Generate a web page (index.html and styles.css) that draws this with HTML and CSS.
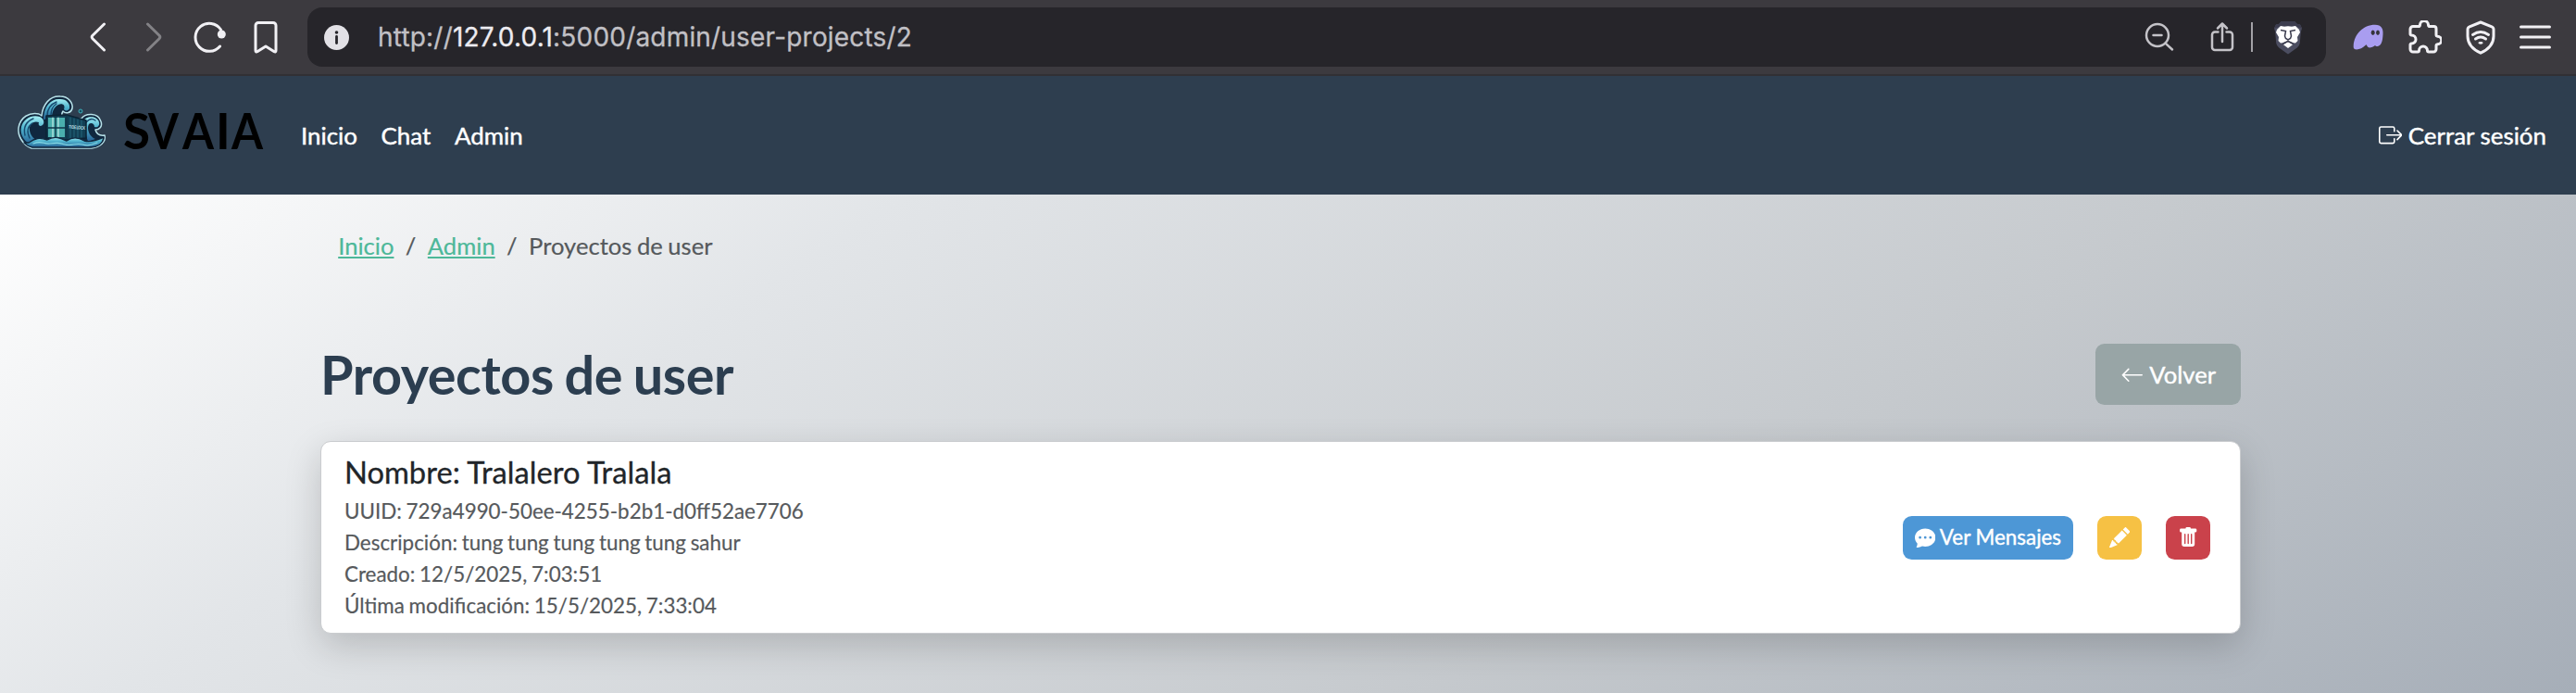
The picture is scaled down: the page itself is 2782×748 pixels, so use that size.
FILE: index.html
```html
<!DOCTYPE html>
<html lang="es">
<head>
<meta charset="utf-8">
<title>Proyectos de user</title>
<link rel="stylesheet" href="styles.css">
</head>
<body>
<div class="chrome">
  <div class="chrome-nav">
    <svg width="18" height="32" viewBox="0 0 18 32" class="line bright"><path d="M15.500 2 3 14.300q-1.600 1.700 0 3.400L15.500 30"/></svg>
    <svg width="18" height="32" viewBox="0 0 18 32" class="line dim"><path d="M2.500 2 15 14.300q1.600 1.700 0 3.400L2.500 30"/></svg>
    <svg width="36" height="34" viewBox="0 0 36 34" class="line bright"><path d="M28.500 27A15 15 0 1 1 29.500 9"/><circle cx="30.300" cy="14" r="4.500" class="solid"/></svg>
    <svg width="26" height="36" viewBox="0 0 26 36" class="line bright"><path d="M5 2.500h16a3 3 0 0 1 3 3v27q0 2.500-2.200 1L13 28l-8.800 5.500Q2 35 2 32.500v-27a3 3 0 0 1 3-3z"/></svg>
  </div>
  <div class="address">
    <svg width="27" height="27" viewBox="0 0 27 27"><circle cx="13.500" cy="13.500" r="13.500" fill="#e2e1e6"/><circle cx="13.500" cy="8" r="1.800" fill="#26252a"/><path d="M13.500 12.500v7" stroke="#26252a" stroke-width="2.800" stroke-linecap="round"/></svg>
    <span class="url">http://<b>127.0.0.1</b>:5000/admin/user-projects/2</span>
    <div class="address-tools">
      <svg width="32" height="32" viewBox="0 0 32 32" class="line soft"><circle cx="14" cy="14" r="12"/><path d="M9.500 14h9M22.800 22.800 30 29.500"/></svg>
      <svg class="share line soft" width="26" height="34" viewBox="0 0 26 34"><path d="M8.500 11.500H5a3 3 0 0 0-3 3v13.500a3 3 0 0 0 3 3h16a3 3 0 0 0 3-3V14.500a3 3 0 0 0-3-3h-3.500M13 22V2.500M8 7.500l5-5 5 5"/></svg>
      <i class="divider"></i>
      <svg width="32" height="37" viewBox="0 0 32 37"><path d="M9 1h14l3 3 3 .5 2 4-1.200 4-1 12q-.5 3-3 5L16 36.500 6.200 29.500q-2.500-2-3-5l-1-12L1 8.500l2-4L6 4z" fill="#4b4d60"/><path d="M9 1h14l3 3 3 .5 2 4-4-1-3-1.500H8L5 7.500l-4 1 2-4L6 4z" fill="#3b3c4e"/><path d="m8 6 4 .8 4-.5 4 .5 4-.8 4 4 1 3-3 5 .5 4-2.500 2.500-4-.5-4-2-4 2-4 .5L5.500 22 6 18l-3-5 1-3z" fill="#fff"/><path d="m16 23 5 3.200L16 30l-5-3.800z" fill="#fff"/><path d="m8 10.500 5.500 1-1 5.500 1 2.500L16 21l2.500-1.500 1-2.500-1-5.500 5.500-1M16 21v1.500l-5.500 2.500M16 22.500l5.500 2.500" fill="none" stroke="#3b3c4e" stroke-width="1.500"/></svg>
    </div>
  </div>
  <div class="chrome-tools">
    <svg width="34" height="28" viewBox="0 0 34 28"><path d="M24 .7C31 .7 33 5 32.500 11c-.3 5-.8 11.500-5 12.800-2 .6-2.500 0-3.500-.8-1.500 1-2 1.800-4.500 2.300-2.300.5-4-.5-4.500-2.500q-.5-1-1.500.2C10.500 26 6 28 2.500 27.300 1 27 .5 25.500.7 23 1.500 11 11 .7 24 .7z" fill="#a99df0"/><ellipse cx="21.700" cy="9.300" rx="2" ry="2.700" fill="#35343b"/><ellipse cx="27" cy="9.300" rx="1.900" ry="2.700" fill="#35343b"/></svg>
    <svg width="36" height="36" viewBox="0 0 36 36" class="line bright"><path d="M5 6.500h6q1.300 0 1.500-1.500a4.500 4.500 0 0 1 9 0q.2 1.500 1.500 1.500h4.500a2.500 2.500 0 0 1 2.500 2.500v6.500q0 1.500 1.500 1.700a4 4 0 0 1 0 8.500q-1.500.3-1.500 1.800v3.500a3 3 0 0 1-3 3h-5q-1.500 0-1.500-1.500a4.500 4.500 0 0 0-9 0q0 1.500-1.500 1.500H5a3 3 0 0 1-3-3v-4.500q0-1.300 1.500-1.500a4.500 4.500 0 0 0 0-9Q2 15.800 2 14.500v-5a3 3 0 0 1 3-3z"/></svg>
    <svg width="32" height="37" viewBox="0 0 32 37" class="line bright"><path d="M16 2 28 6.800q2 .8 2 3V17c0 9-6 14.500-14 18.200C8 31.500 2 26 2 17V9.800q0-2.200 2-3z"/><path d="M7.500 15.500q8.500-6 17 0M10.500 20q5.500-4 11 0"/><ellipse cx="16" cy="24.300" rx="2.600" ry="1.400" class="solid"/></svg>
    <svg width="34" height="28" viewBox="0 0 34 28" class="line bright"><path d="M1.500 3h31M1.500 14h31M1.500 25h31"/></svg>
  </div>
</div>

<nav class="navbar">
  <a class="brand">
    <svg width="98" height="62" viewBox="0 0 98 62">
      <defs><linearGradient id="sea" x1="0" y1="0" x2="0" y2="1"><stop offset="0" stop-color="#a4eef3"/><stop offset=".4" stop-color="#50b5cf"/><stop offset="1" stop-color="#245d91"/></linearGradient></defs>
      <g stroke-linejoin="round" stroke-linecap="round">
        <path d="M16 58C6 54 1 44 2 36 4 24 14 19 24 21l3 2C28 11 36 1 47 2c9 0 14 7 13 13-1 5-7 6-10 3-3 5 0 7 2 8h18c4-6 18-7 21 3 2 6-2 9-6 9 1 4 3 7 10 6 2 7-5 13-14 14z" fill="#10283f" stroke="#b7e1e8" stroke-width="1.500"/>
        <path d="M29 27C29 12 38 4 47 5c7 0 11 5 10 10-1 3-5 3-6 1 2-5-2-7-6-5-6 3-7 10-7 15z" fill="url(#sea)"/>
        <path d="M20 55C8 53 3 43 5 35c2-9 12-14 20-11 5 2 6 9 1 10-2 0-3-2-2-4-6-2-11 2-10 9 1 6 6 11 13 13z" fill="url(#sea)"/>
        <path d="M71 30c4-8 16-7 18 0 1 4-2 6-5 5 0-4-4-5-6-3-3 5 1 14 7 16l-8 3z" fill="url(#sea)"/>
        <path d="M33 23q0-11 10-15M37 22q0-8 6-12M9 44q-3-13 9-18M14 47q-5-11 3-16M75 30q5-6 10-2" fill="none" stroke="#17496e" stroke-width="1.400"/>
        <path d="m32 23 22-1 21 6v19l-21 2-22-2z" fill="#123f54" stroke="#0b2335" stroke-width="1.500"/>
        <path d="M34 25h18v21H34z" fill="#4aaead"/>
        <path d="M39 25v21M45 25v21" stroke="#c4e8e5" stroke-width="1.200"/>
        <path d="M33 36h20M42 24v23M54 23v25" stroke="#103548" stroke-width="1.400"/>
        <path d="M58 25v22M62 26v21M66 27v20M70 28v18" stroke="#22677a"/>
        <path d="M13 52c7-5 12-6 20-3 8-5 15-2 21 1 7-5 14-3 19 0 7 2 14-1 21-4-1 8-8 11-14 11H17q-5-1-9-5z" fill="url(#sea)" stroke="#10283f" stroke-width="1.400"/>
        <path d="M18 53c9-4 11 1 18 0s9-1 16 1 12-2 19 0 10 0 16-2" fill="none" stroke="#84d8e4" stroke-width="1.200"/>
      </g>
      <circle cx="69" cy="18" r="2" fill="#164f62" stroke="#3fafb9"/>
      <text x="56" y="36.500" class="crate" textLength="18" lengthAdjust="spacingAndGlyphs" transform="rotate(5 56 36)">TIDELOCK</text>
    </svg>
    <svg class="wordmark" width="160" height="72" viewBox="-4 -14 160 72">
      <text y="39" class="brand-name"><tspan x="-1">S</tspan><tspan x="26" textLength="33" lengthAdjust="spacingAndGlyphs">V</tspan><tspan x="63" textLength="34" lengthAdjust="spacingAndGlyphs">A</tspan><tspan x="99">I</tspan><tspan x="116" textLength="34" lengthAdjust="spacingAndGlyphs">A</tspan></text>
    </svg>
  </a>
  <div class="links"><a>Inicio</a><a>Chat</a><a>Admin</a></div>
  <a class="logout"><svg class="bi" viewBox="0 0 16 16"><path fill-rule="evenodd" d="M10 12.500a.5.5 0 0 1-.5.5h-8a.5.5 0 0 1-.5-.5v-9a.5.5 0 0 1 .5-.5h8a.5.5 0 0 1 .5.5v2a.5.5 0 0 0 1 0v-2A1.500 1.500 0 0 0 9.500 2h-8A1.500 1.500 0 0 0 0 3.500v9A1.500 1.500 0 0 0 1.500 14h8a1.500 1.500 0 0 0 1.500-1.500v-2a.5.5 0 0 0-1 0z"/><path fill-rule="evenodd" d="M15.854 8.354a.5.5 0 0 0 0-.708l-3-3a.5.5 0 0 0-.708.708L14.293 7.500H5.500a.5.5 0 0 0 0 1h8.793l-2.147 2.146a.5.5 0 0 0 .708.708z"/></svg> Cerrar sesión</a>
</nav>

<main class="page">
  <div class="container">
    <div class="breadcrumb"><a>Inicio</a><span>/</span><a>Admin</a><span>/</span><span>Proyectos de user</span></div>
    <header class="heading">
      <h1>Proyectos de user</h1>
      <a class="btn back"><svg class="bi" viewBox="0 0 16 16"><path fill-rule="evenodd" d="M15 8a.5.5 0 0 0-.5-.5H2.707l3.147-3.146a.5.5 0 1 0-.708-.708l-4 4a.5.5 0 0 0 0 .708l4 4a.5.5 0 0 0 .708-.708L2.707 8.500H14.500A.5.5 0 0 0 15 8"/></svg> Volver</a>
    </header>
    <section class="card">
      <div class="details">
        <h5>Nombre: Tralalero Tralala</h5>
        <p>UUID: 729a4990-50ee-4255-b2b1-d0ff52ae7706</p>
        <p>Descripción: tung tung tung tung tung sahur</p>
        <p>Creado: 12/5/2025, 7:03:51</p>
        <p>Última modificación: 15/5/2025, 7:33:04</p>
      </div>
      <div class="actions">
        <a class="btn small info"><svg class="bi" viewBox="0 0 16 16"><path d="M16 8c0 3.866-3.582 7-8 7a9 9 0 0 1-2.347-.306c-.584.296-1.925.864-4.181 1.234-.2.032-.352-.176-.273-.362.354-.836.674-1.950.77-2.966C.744 11.370 0 9.760 0 8c0-3.866 3.582-7 8-7s8 3.134 8 7M5 8a1 1 0 1 0-2 0 1 1 0 0 0 2 0m4 0a1 1 0 1 0-2 0 1 1 0 0 0 2 0m3 1a1 1 0 1 0 0-2 1 1 0 0 0 0 2"/></svg> Ver Mensajes</a>
        <a class="btn small warning"><svg class="bi" viewBox="0 0 16 16"><path d="M12.854.146a.5.5 0 0 0-.707 0L10.500 1.793 14.207 5.500l1.647-1.646a.5.5 0 0 0 0-.708zm.646 6.061L9.793 2.500 3.293 9H3.500a.5.5 0 0 1 .5.5v.5h.5a.5.5 0 0 1 .5.5v.5h.5a.5.5 0 0 1 .5.5v.5h.5a.5.5 0 0 1 .5.5v.207zm-7.468 7.468A.5.5 0 0 1 6 13.500V13h-.5a.5.5 0 0 1-.5-.5V12h-.5a.5.5 0 0 1-.5-.5V11h-.5a.5.5 0 0 1-.5-.5V10h-.5a.5.5 0 0 1-.175-.032l-.179.178a.5.5 0 0 0-.11.168l-2 5a.5.5 0 0 0 .65.65l5-2a.5.5 0 0 0 .168-.11z"/></svg></a>
        <a class="btn small danger"><svg class="bi" viewBox="0 0 16 16"><path d="M2.500 1a1 1 0 0 0-1 1v1a1 1 0 0 0 1 1H3v9a2 2 0 0 0 2 2h6a2 2 0 0 0 2-2V4h.5a1 1 0 0 0 1-1V2a1 1 0 0 0-1-1H10a1 1 0 0 0-1-1H7a1 1 0 0 0-1 1zm3 4a.5.5 0 0 1 .5.5v7a.5.5 0 0 1-1 0v-7a.5.5 0 0 1 .5-.5M8 5a.5.5 0 0 1 .5.5v7a.5.5 0 0 1-1 0v-7A.5.5 0 0 1 8 5m3 .5v7a.5.5 0 0 1-1 0v-7a.5.5 0 0 1 1 0"/></svg></a>
      </div>
    </section>
  </div>
</main>
</body>
</html>
```

FILE: styles.css
```css
* { box-sizing: border-box; }
body { margin: 0; height: 748px; display: flex; flex-direction: column; overflow: hidden; font: 25.6px/1.5 Lato, sans-serif; color: #212529; }
svg { display: block; flex: none; }
.chrome { height: 82px; flex: none; display: flex; align-items: flex-start; background: #3c3a3f; border-bottom: 2px solid #313034; }
.chrome-nav { width: 332px; height: 80px; padding-left: 97px; display: flex; align-items: center; gap: 42px; }
.chrome-nav svg:nth-child(3) { margin-left: -8px; }
.chrome-nav svg:nth-child(4) { margin-left: -13px; }
.line { fill: none; stroke-width: 3; stroke-linecap: round; stroke-linejoin: round; }
.bright { stroke: #f1f0f4; }
.dim { stroke: #838286; }
.soft { stroke: #c4c3c8; stroke-width: 2.500; }
.solid { fill: #f1f0f4; stroke: none; }
.address { width: 2180px; height: 64px; margin-top: 8px; padding: 0 25px 0 18px; border-radius: 16px; background: #26252a; display: flex; align-items: center; }
.url { margin-left: 31px; font: 28px/40px Inter, sans-serif; letter-spacing: .19px; color: #c1c0c5; white-space: nowrap; -webkit-text-stroke: .3px currentColor; }
.url b { font-weight: 400; color: #edecf1; }
.address-tools { margin-left: auto; display: flex; align-items: center; }
.share { margin-left: 39px; }
.divider { width: 2px; height: 32px; margin: 0 22px 0 18px; background: #a3a2a7; }
.chrome-tools { height: 80px; margin-left: 29px; display: flex; align-items: center; gap: 26px; }
.navbar { height: 128px; flex: none; background: #2e3e4f; display: flex; align-items: center; padding: 0 32px 0 18px; color: #fff; }
.brand { display: flex; align-items: flex-start; width: 307px; height: 88px; }
.wordmark { margin: 6px 0 0 14px; }
.brand-name { font: 700 53px Lato, sans-serif; fill: #000; }
.crate { font: 700 5px Lato, sans-serif; fill: #d3edf2; }
.links { display: flex; gap: 25.600px; }
.links, .logout { font-size: 25.900px; -webkit-text-stroke: .45px #fff; }
.logout { margin-left: auto; }
.logout .bi { font-size: 25.600px; }
.bi { display: inline-block; width: 1em; height: 1em; vertical-align: -.125em; fill: currentColor; }
.page { flex: 1; background: linear-gradient(148deg, #fff 0%, #e2e5e8 27%, #c5c9cd 66%, #a6aeb8 100%); }
.container { width: 2074px; margin: 0 auto 0 346px; }
.breadcrumb { display: flex; gap: 12.400px; padding: 36px 19.200px 0; color: #55595c; word-spacing: -1px; -webkit-text-stroke: .2px currentColor; }
.breadcrumb a { color: #4db899; text-decoration: underline; }
.heading { display: flex; justify-content: space-between; align-items: center; margin-top: 87px; height: 66px; }
h1 { margin: 0; font-size: 57.600px; line-height: 66px; font-weight: 700; letter-spacing: -.4px; word-spacing: -2px; color: #2c3e50; }
.btn { color: #fff; border-radius: 9.600px; white-space: nowrap; -webkit-text-stroke: .4px #fff; }
.bi { -webkit-text-stroke: 0; }
.back { height: 66px; padding: 14px 27px; background: #98a5a6; }
.card { height: 208px; margin-top: 39px; padding: 14px 32px 12px 25px; display: flex; justify-content: space-between; align-items: center; background: #fff; border: 1px solid #cacccf; border-radius: 11px; box-shadow: 0 13px 38px rgba(0, 0, 0, .175); }
.details { align-self: flex-start; }
h5 { margin: 0 0 6px; font-size: 32.700px; line-height: 38px; font-weight: 400; -webkit-text-stroke: .3px currentColor; }
p { margin: 0; font-size: 22.400px; line-height: 33.700px; word-spacing: -1px; color: #56595c; -webkit-text-stroke: .2px currentColor; }
.actions { display: flex; gap: 25.600px; margin-top: -2px; }
.small { height: 47px; padding: 6.500px 13px; font-size: 22.400px; }
.info { background: #4d97d6; }
.warning { background: #f6c144; }
.danger { background: #ca424b; }
```
